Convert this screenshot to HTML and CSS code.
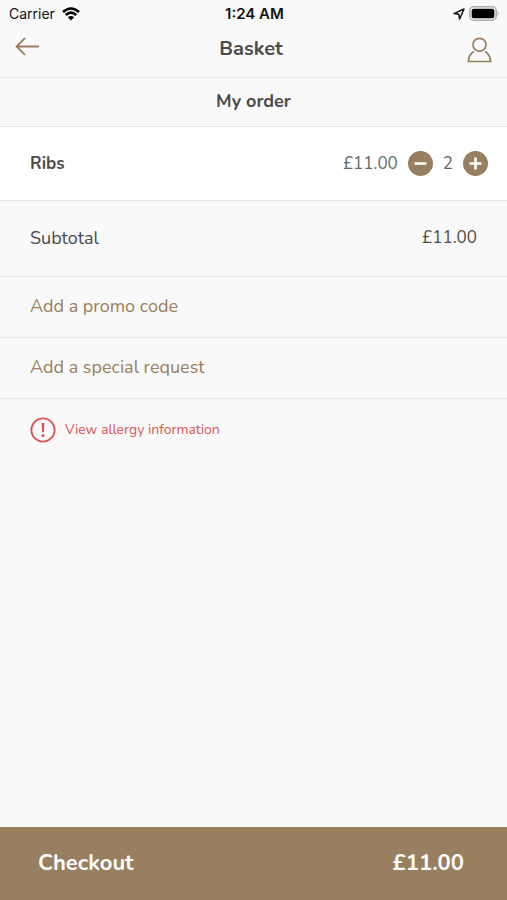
FILE: index.html
```html
<!DOCTYPE html>
<html lang="en">
<head>
<meta charset="utf-8">
<meta name="viewport" content="width=device-width, initial-scale=1">
<title>Basket</title>
<link rel="stylesheet" href="styles.css">
</head>
<body>
<div class="status">
  <div class="carrier">
    <span>Carrier</span>
    <svg width="18" height="14" viewBox="0 0 18 14" aria-hidden="true">
      <path d="M1 5Q9-2 17 5M3.800 8Q9 3.400 14.200 8" fill="none" stroke="#000" stroke-width="2.600"/>
      <path d="M5.900 10.300Q9 7.600 12.100 10.300L9 13.500Z"/>
    </svg>
  </div>
  <time class="clock">1:24 AM</time>
  <div class="indicators">
    <svg width="12" height="12" viewBox="0 0 12 12" aria-hidden="true">
      <path d="M1 5.600L11 1L6.600 11L5.800 6.300Z" fill="none" stroke="#111" stroke-width="1.500" stroke-linejoin="round"/>
    </svg>
    <svg width="31" height="15" viewBox="0 0 31 15" aria-hidden="true">
      <rect x=".8" y=".8" width="26.400" height="13.400" rx="4" fill="#fafafa" stroke="#adadad" stroke-width="1.500"/>
      <rect x="2.700" y="2.700" width="22.600" height="9.600" rx="2"/>
      <path d="M28.500 5Q31 7.500 28.500 10Z" fill="#adadad"/>
    </svg>
  </div>
</div>
<header class="nav">
  <button class="icon-button back" aria-label="Back">
    <svg width="25" height="19" viewBox="0 0 25 19"><path d="M10 1.200L1.500 9.500L10 17.800M1.500 9.500H24" fill="none" stroke="currentColor" stroke-width="1.800"/></svg>
  </button>
  <h1>Basket</h1>
  <button class="icon-button account" aria-label="Account">
    <svg width="25" height="26" viewBox="0 0 25 26"><g fill="none" stroke="currentColor" stroke-width="1.700"><circle cx="12.500" cy="7.800" r="6.500"/><path d="M7 14.600Q1.800 17.600 1.300 24.500H23.700Q23.200 17.600 18 14.600"/></g></svg>
  </button>
</header>
<main>
  <h2 class="section-title">My order</h2>
  <section class="item">
    <h3>Ribs</h3>
    <div class="stepper">
      <span class="price">£11.00</span>
      <button class="icon-button" aria-label="Remove one"><svg width="25" height="25" viewBox="0 0 25 25"><circle cx="12.500" cy="12.500" r="12.500" fill="currentColor"/><path d="M6.500 12.500H18.500" stroke="#fff" stroke-width="2.600"/></svg></button>
      <span class="quantity">2</span>
      <button class="icon-button" aria-label="Add one"><svg width="25" height="25" viewBox="0 0 25 25"><circle cx="12.500" cy="12.500" r="12.500" fill="currentColor"/><path d="M6.500 12.500H18.500M12.500 6.500V18.500" stroke="#fff" stroke-width="2.600"/></svg></button>
    </div>
  </section>
  <div class="subtotal"><span>Subtotal</span><span class="price">£11.00</span></div>
  <button class="action">Add a promo code</button>
  <button class="action">Add a special request</button>
  <a class="allergy" href="#">
    <svg width="26" height="26" viewBox="0 0 26 26" aria-hidden="true"><circle cx="13" cy="13" r="11.600" fill="none" stroke="currentColor" stroke-width="1.900"/><path d="M11.600 6H14.400L13.900 15.300H12.100Z" fill="currentColor"/><circle cx="13" cy="18.400" r="1.500" fill="currentColor"/></svg>
    <span>View allergy information</span>
  </a>
</main>
<button class="checkout"><span>Checkout</span><span>£11.00</span></button>
</body>
</html>
```

FILE: styles.css
```css
:root {
  --brand: #987f60;
  --line: #e6e7e7;
  --text: #4b4b4b;
}

* {
  box-sizing: border-box;
}

body {
  display: flex;
  flex-direction: column;
  min-height: 100vh;
  margin: 0;
  background: #f9f9f9;
  color: var(--text);
  font: 18px/24px Nunito, Lato, sans-serif;
}

h1, h2, h3 {
  margin: 0;
  font-weight: 700;
}

button {
  border: 0;
  background: none;
  color: inherit;
  font: inherit;
  cursor: pointer;
}

svg {
  display: block;
}

.status,
.nav {
  display: grid;
  align-items: center;
}

.status {
  grid-template-columns: 1fr auto 1fr;
  height: 27px;
  padding: 0 7px 0 9px;
  color: #111;
  font: 15px/27px Inter, sans-serif;
}

.carrier,
.indicators {
  display: flex;
  align-items: center;
  gap: 7px;
}

.carrier {
  font-size: 14px;
}

.indicators {
  justify-content: flex-end;
  gap: 4px;
}

.clock {
  font-weight: 600;
}

.nav {
  grid-template-columns: 25px 1fr 30px;
  height: 51px;
  padding: 0 15px 7px;
  border-bottom: 1px solid var(--line);
}

.nav h1 {
  font-size: 20px;
  text-align: center;
}

.icon-button {
  padding: 0;
  color: var(--brand);
}

.account {
  justify-self: end;
  padding-top: 2px;
}

.back {
  padding-bottom: 4px;
}

.section-title {
  padding: 11px 12px 13px;
  border-bottom: 1px solid var(--line);
  font-size: 18px;
  text-align: center;
}

.item,
.subtotal {
  display: flex;
  align-items: center;
  justify-content: space-between;
  padding: 25px 30px 26px;
  border-bottom: 1px solid var(--line);
}

.item {
  padding: 24px 19px 24px 30px;
  background: #fff;
}

.item h3,
.price,
.quantity {
  font-size: 17px;
}

.stepper {
  display: flex;
  align-items: center;
  gap: 10px;
  color: #62686a;
}

.action {
  display: block;
  width: 100%;
  padding: 17px 30px 19px;
  border-bottom: 1px solid var(--line);
  color: var(--brand);
  text-align: left;
}

.allergy {
  display: inline-flex;
  align-items: center;
  gap: 9px;
  padding: 18px 30px;
  color: #db5353;
  font-size: 14px;
  text-decoration: none;
}

.checkout {
  display: flex;
  align-items: center;
  justify-content: space-between;
  margin-top: auto;
  padding: 24px 43px 25px 38px;
  background: var(--brand);
  color: #fff;
  font-size: 22px;
  font-weight: 700;
}
```
